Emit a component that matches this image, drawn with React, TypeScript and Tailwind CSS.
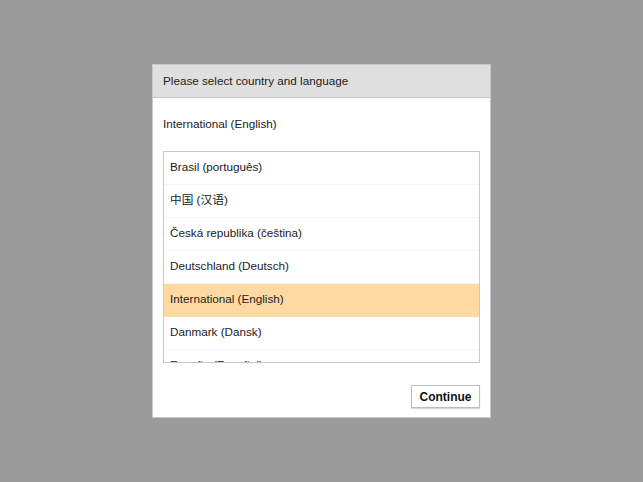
const items = [
  "Brasil (português)",
  "中国 (汉语)",
  "Česká republika (čeština)",
  "Deutschland (Deutsch)",
  "International (English)",
  "Danmark (Dansk)",
  "España (Español)",
];

export default function App() {
  return (
    <div className="w-[643px] h-[482px] bg-[#9b9b9b] flex items-start justify-center pt-[64px] font-['Liberation_Sans','Noto_Sans_CJK_SC',sans-serif]">
      <div className="w-[339px] h-[354px] bg-white border border-[#c8c8c8] flex flex-col">
        {/* Header */}
        <div className="h-[33px] bg-[#dfdfdf] border-b border-[#c4c4c4] flex items-center px-[10px] text-[11.7px] text-[#222]">
          Please select country and language
        </div>

        <div className="px-[10px] pt-[19px] text-[11.7px] text-[#222] leading-[14px]">International (English)</div>

        {/* List */}
        <div className="mx-[10px] mt-[20px] h-[212px] border border-[#c8c8c8] overflow-hidden">
          {items.map((item, i) => (
            <div
              key={item}
              className={
                i === 4
                  ? "h-[33px] flex items-center px-[6px] pb-[3px] text-[11.7px] text-[#222] bg-[#fedaa3]"
                  : "h-[33px] flex items-center px-[6px] pb-[3px] text-[11.7px] text-[#222] border-b border-[#f6f6f6]"
              }
            >
              {item}
            </div>
          ))}
        </div>

        <div className="flex justify-end px-[10px] mt-[22px]">
          <button className="h-[23px] w-[69px] bg-white border border-[#bdbdbd] shadow-[0_1px_1px_rgba(0,0,0,0.15)] text-[12px] font-bold text-[#111]">
            Continue
          </button>
        </div>
      </div>
    </div>
  );
}
